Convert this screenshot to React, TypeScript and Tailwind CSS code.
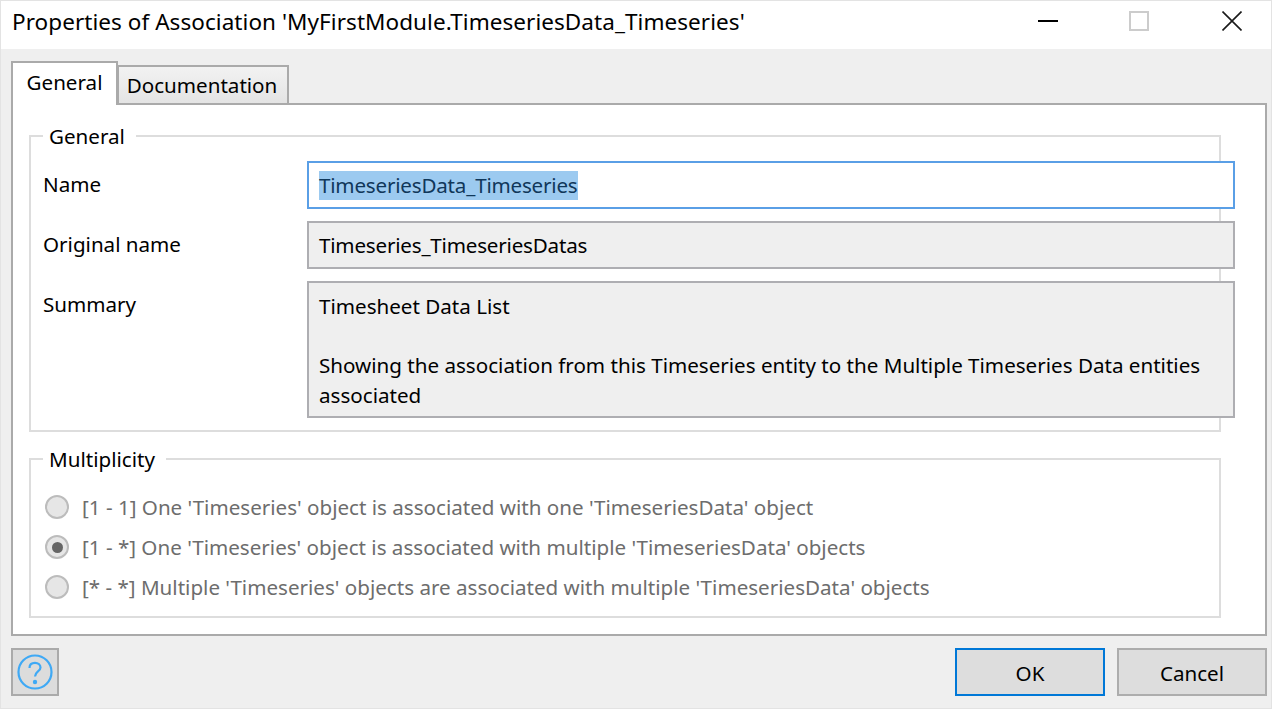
import type { ReactNode } from "react";

function Group({ title, className, children }: { title: string; className: string; children: ReactNode }) {
  return (
    <fieldset className={`ml-4 w-[1192px] min-w-0 border-2 border-[#dddddd] ${className}`}>
      <legend className="ml-3 pl-[6px] pr-[11px] leading-[26px] h-[26px] text-black">{title}</legend>
      {children}
    </fieldset>
  );
}

function Radio({ checked, label }: { checked?: boolean; label: string }) {
  return (
    <div className="h-10 flex items-center">
      <span className="ml-[14px] w-6 h-6 rounded-full border-2 border-[#bcbcbc] bg-[#e6e6e6] flex items-center justify-center">
        {checked && <span className="w-[11px] h-[11px] rounded-full bg-[#666666]" />}
      </span>
      <span className="ml-[13px] text-[#6d6d6d]">{label}</span>
    </div>
  );
}

export default function App() {
  return (
    <div className="w-[1272px] h-[709px] bg-[#efefef] border border-[#e3e3e3] flex flex-col overflow-hidden font-['Noto_Sans','Open_Sans',sans-serif] text-[20.6px] text-black">
      {/* title bar */}
      <div className="h-[48px] bg-white flex items-center shrink-0">
        <span className="ml-[11px] pb-[6px] text-[22.5px] tracking-[0.06px]">Properties of Association 'MyFirstModule.TimeseriesData_Timeseries'</span>
        <div className="ml-auto flex items-center pb-[8px]">
          <span className="w-5 h-[2px] bg-black mr-[71px]" />
          <span className="w-5 h-5 border-2 border-[#cccccc] mr-[73px]" />
          <svg className="mr-[29px]" width="20" height="20" viewBox="0 0 20 20">
            <path d="M0.5 0.5 L19.5 19.5 M19.5 0.5 L0.5 19.5" stroke="#1a1a1a" strokeWidth="1.6" fill="none" />
          </svg>
        </div>
      </div>

      {/* tabs */}
      <div className="h-[54px] shrink-0 pl-[10px] pt-[12px] flex items-end">
        <div className="relative z-10 w-[107px] h-[44px] -mb-[2px] bg-white border-2 border-b-0 border-[#aaaaaa] flex items-center justify-center pb-[3px]">General</div>
        <div className="w-[172px] h-[38px] -ml-[1px] pr-[2px] bg-gradient-to-b from-[#f2f2f2] to-[#e4e4e4] border-2 border-b-0 border-[#aaaaaa] flex items-center justify-center">Documentation</div>
      </div>

      {/* pane */}
      <div className="ml-[10px] w-[1256px] h-[533px] shrink-0 bg-white border-2 border-[#aaaaaa] pt-[18px]">
        <Group title="General" className="h-[309px]">
          <div className="flex flex-col">
            <div className="flex mt-[12px]">
              <span className="w-[276px] shrink-0 pl-3 leading-[47px]">Name</span>
              <div className="w-[928px] shrink-0 h-[48px] border-2 border-[#5a9fe6] bg-white flex items-center pl-[10px]">
                <span className="bg-[#9ccaf0] text-[#10375a] leading-[29px] h-[29px] tracking-[-0.2px]">TimeseriesData_Timeseries</span>
              </div>
            </div>
            <div className="flex mt-[12px]">
              <span className="w-[276px] shrink-0 pl-3 leading-[47px]">Original name</span>
              <div className="w-[928px] shrink-0 h-[48px] border-2 border-[#aeaeb2] bg-[#efefef] flex items-center pl-[10px] tracking-[-0.2px]">Timeseries_TimeseriesDatas</div>
            </div>
            <div className="flex mt-[12px]">
              <span className="w-[276px] shrink-0 pl-3 leading-[47px]">Summary</span>
              <div className="w-[928px] shrink-0 h-[137px] border-2 border-[#aeaeb2] bg-[#efefef] pl-[10px] pr-5 pt-[8px] leading-[30px]">
                <p>Timesheet Data List</p>
                <p className="mt-[29px]">Showing the association from this Timeseries entity to the Multiple Timeseries Data entities associated</p>
              </div>
            </div>
          </div>
        </Group>
        <Group title="Multiplicity" className="h-[172px] mt-[14px]">
          <div className="pt-[15px]">
            <Radio label="[1 - 1] One 'Timeseries' object is associated with one 'TimeseriesData' object" />
            <Radio checked label="[1 - *] One 'Timeseries' object is associated with multiple 'TimeseriesData' objects" />
            <Radio label="[* - *] Multiple 'Timeseries' objects are associated with multiple 'TimeseriesData' objects" />
          </div>
        </Group>
      </div>

      {/* footer */}
      <div className="flex items-start pt-[12px] pl-[10px] pr-[4px]">
        <div className="w-[48px] h-[48px] bg-[#dcdcdc] border-2 border-[#aaaaaa] flex items-center justify-center">
          <svg width="36" height="36" viewBox="0 0 36 36" fill="none">
            <circle cx="18" cy="18" r="16.5" stroke="#3fa9f5" strokeWidth="2.2" />
            <path d="M12.5 14 C12.5 10.5 15 8.8 18 8.8 C21 8.8 23.5 10.6 23.5 13.5 C23.5 17.5 18 17.5 18 22.5" stroke="#3fa9f5" strokeWidth="2.2" />
            <circle cx="18" cy="28" r="2.2" fill="#3fa9f5" />
          </svg>
        </div>
        <button className="ml-auto w-[150px] h-[48px] pt-[2px] bg-[#dddddd] border-2 border-[#0078d7]">OK</button>
        <button className="ml-3 w-[150px] h-[48px] pt-[2px] bg-[#dddddd] border-2 border-[#adadad]">Cancel</button>
      </div>
    </div>
  );
}
